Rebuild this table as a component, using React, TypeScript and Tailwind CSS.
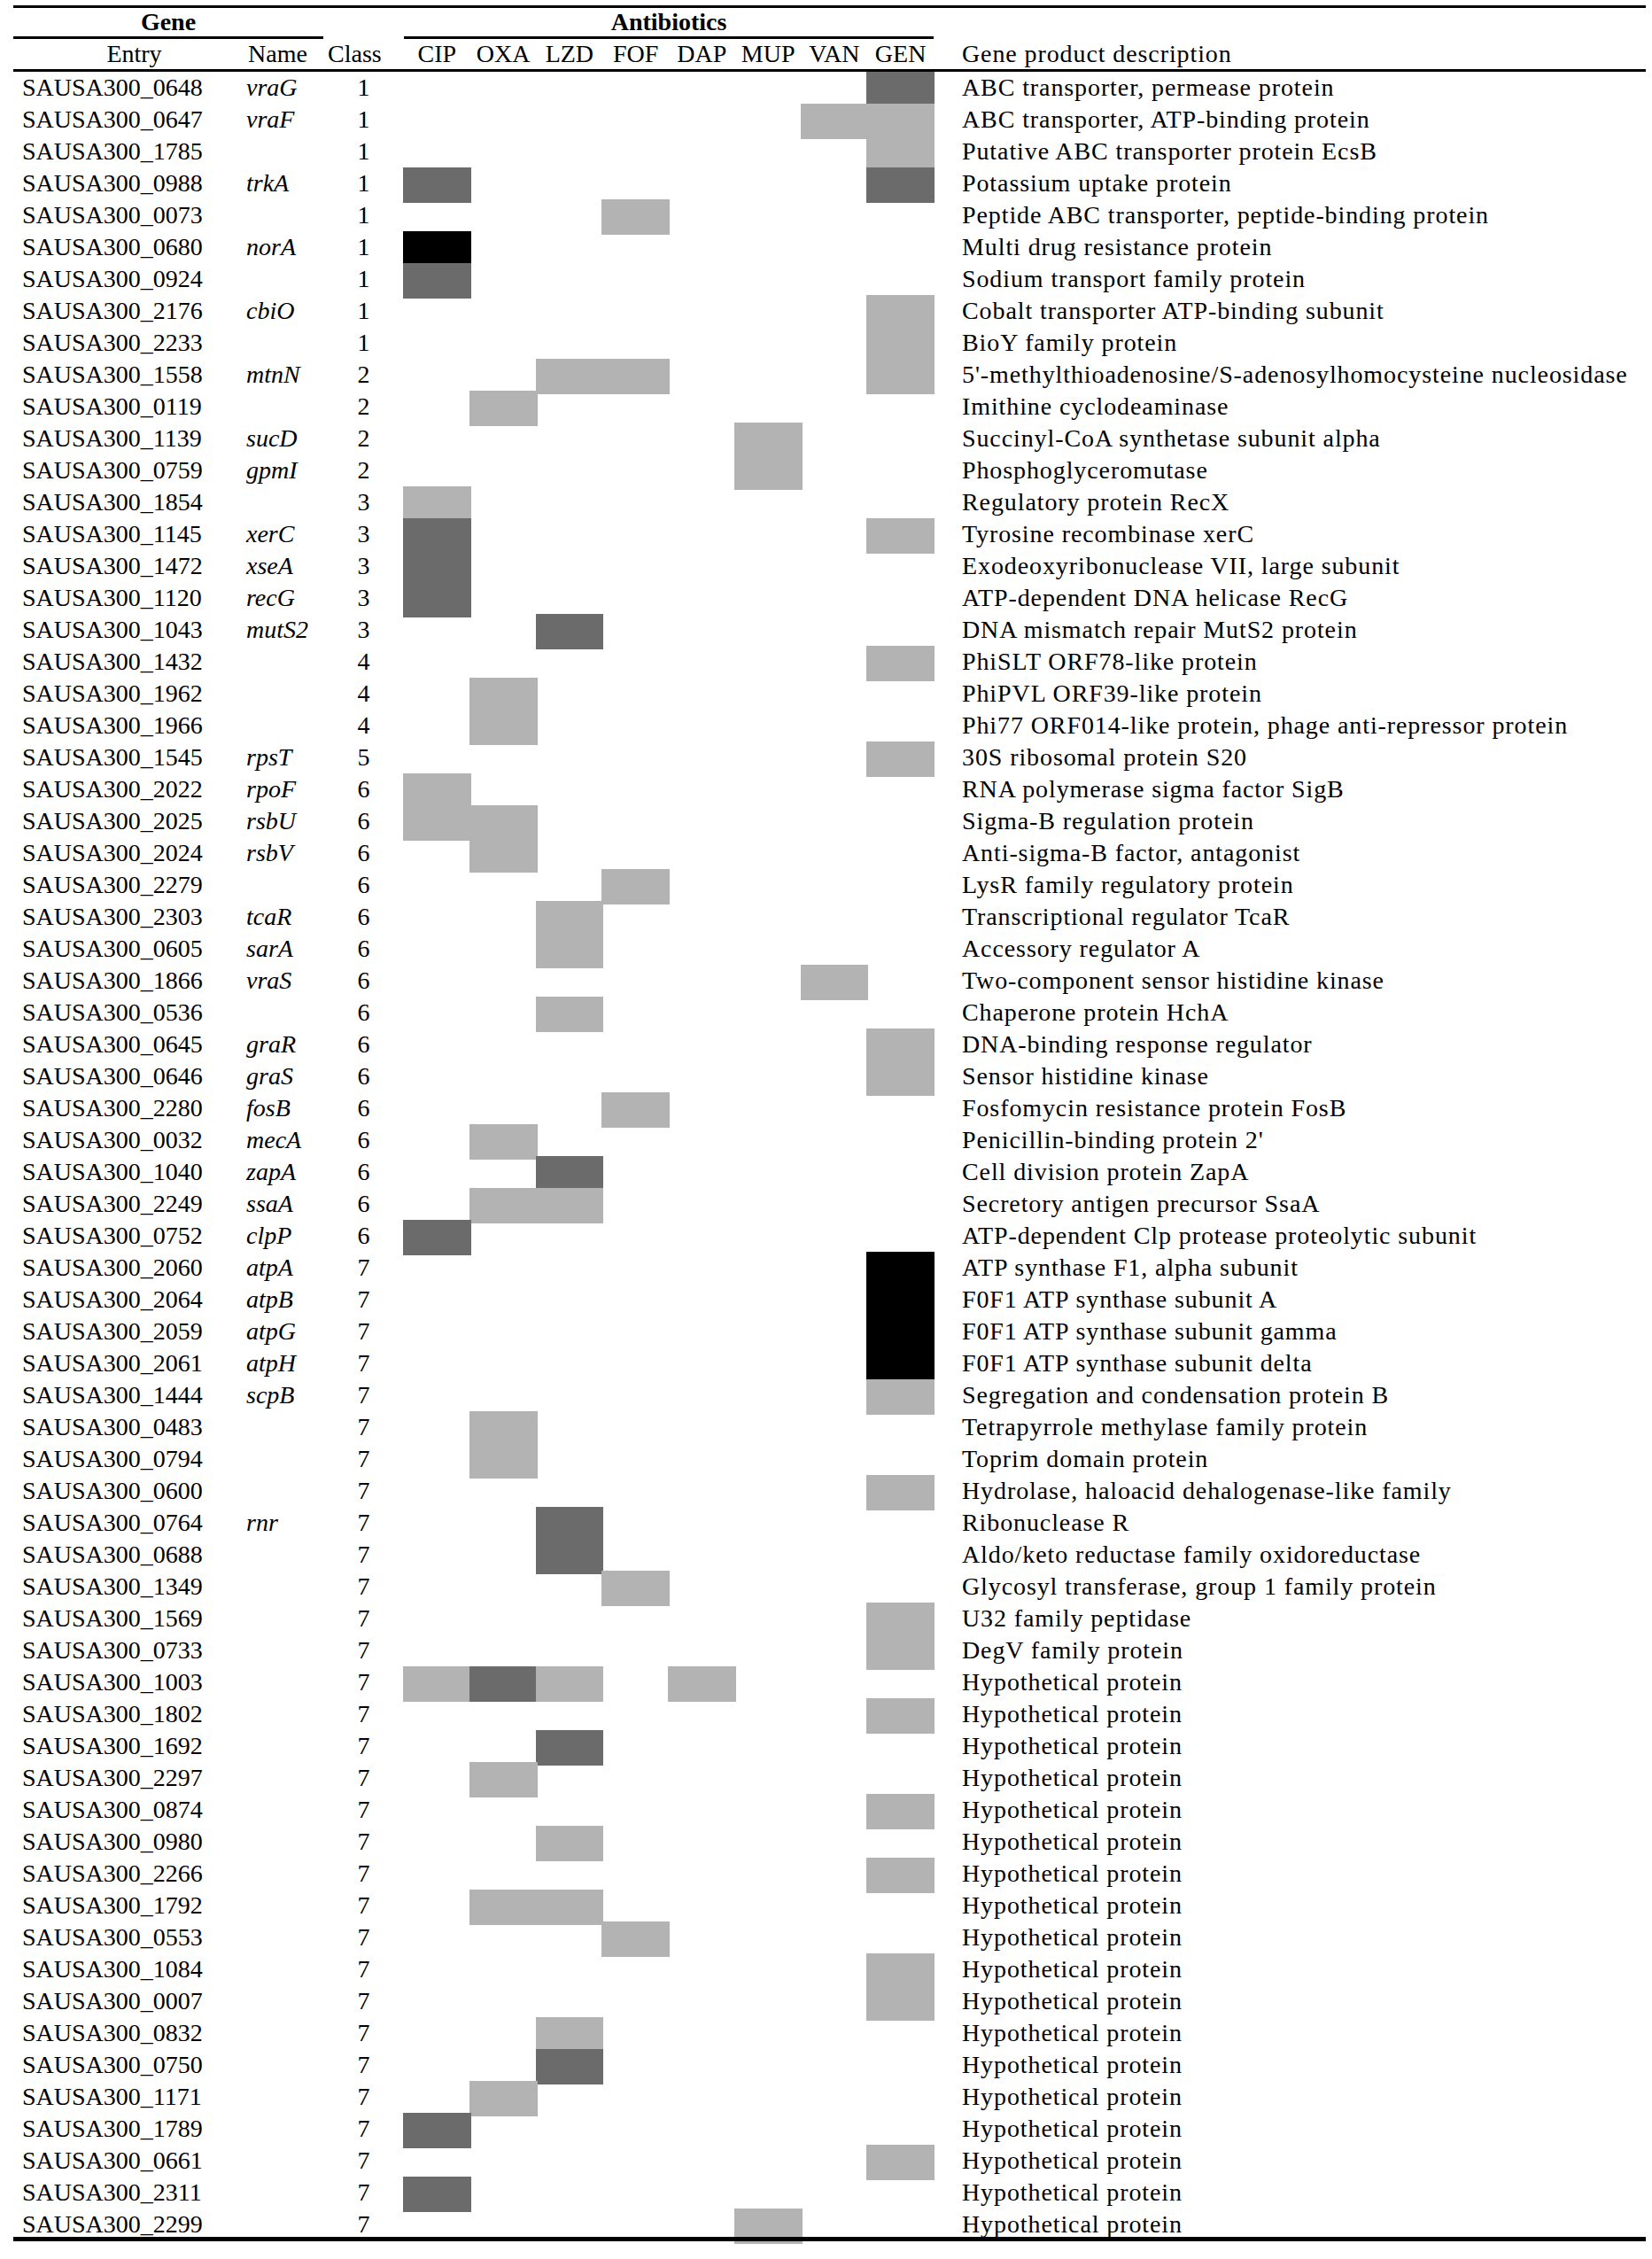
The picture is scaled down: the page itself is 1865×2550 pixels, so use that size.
import React from "react";

// cells: CIP OXA LZD FOF DAP MUP VAN GEN  ('.' none, 'l' light, 'd' dark, 'b' black)
const rows: [string, string, string, string, string][] = [
    ["SAUSA300_0648", "vraG", "1", ".......d", "ABC transporter, permease protein"],
    ["SAUSA300_0647", "vraF", "1", "......ll", "ABC transporter, ATP-binding protein"],
    ["SAUSA300_1785", "", "1", ".......l", "Putative ABC transporter protein EcsB"],
    ["SAUSA300_0988", "trkA", "1", "d......d", "Potassium uptake protein"],
    ["SAUSA300_0073", "", "1", "...l....", "Peptide ABC transporter, peptide-binding protein"],
    ["SAUSA300_0680", "norA", "1", "b.......", "Multi drug resistance protein"],
    ["SAUSA300_0924", "", "1", "d.......", "Sodium transport family protein"],
    ["SAUSA300_2176", "cbiO", "1", ".......l", "Cobalt transporter ATP-binding subunit"],
    ["SAUSA300_2233", "", "1", ".......l", "BioY family protein"],
    ["SAUSA300_1558", "mtnN", "2", "..ll...l", "5'-methylthioadenosine/S-adenosylhomocysteine nucleosidase"],
    ["SAUSA300_0119", "", "2", ".l......", "Imithine cyclodeaminase"],
    ["SAUSA300_1139", "sucD", "2", ".....l..", "Succinyl-CoA synthetase subunit alpha"],
    ["SAUSA300_0759", "gpmI", "2", ".....l..", "Phosphoglyceromutase"],
    ["SAUSA300_1854", "", "3", "l.......", "Regulatory protein RecX"],
    ["SAUSA300_1145", "xerC", "3", "d......l", "Tyrosine recombinase xerC"],
    ["SAUSA300_1472", "xseA", "3", "d.......", "Exodeoxyribonuclease VII, large subunit"],
    ["SAUSA300_1120", "recG", "3", "d.......", "ATP-dependent DNA helicase RecG"],
    ["SAUSA300_1043", "mutS2", "3", "..d.....", "DNA mismatch repair MutS2 protein"],
    ["SAUSA300_1432", "", "4", ".......l", "PhiSLT ORF78-like protein"],
    ["SAUSA300_1962", "", "4", ".l......", "PhiPVL ORF39-like protein"],
    ["SAUSA300_1966", "", "4", ".l......", "Phi77 ORF014-like protein, phage anti-repressor protein"],
    ["SAUSA300_1545", "rpsT", "5", ".......l", "30S ribosomal protein S20"],
    ["SAUSA300_2022", "rpoF", "6", "l.......", "RNA polymerase sigma factor SigB"],
    ["SAUSA300_2025", "rsbU", "6", "ll......", "Sigma-B regulation protein"],
    ["SAUSA300_2024", "rsbV", "6", ".l......", "Anti-sigma-B factor, antagonist"],
    ["SAUSA300_2279", "", "6", "...l....", "LysR family regulatory protein"],
    ["SAUSA300_2303", "tcaR", "6", "..l.....", "Transcriptional regulator TcaR"],
    ["SAUSA300_0605", "sarA", "6", "..l.....", "Accessory regulator A"],
    ["SAUSA300_1866", "vraS", "6", "......l.", "Two-component sensor histidine kinase"],
    ["SAUSA300_0536", "", "6", "..l.....", "Chaperone protein HchA"],
    ["SAUSA300_0645", "graR", "6", ".......l", "DNA-binding response regulator"],
    ["SAUSA300_0646", "graS", "6", ".......l", "Sensor histidine kinase"],
    ["SAUSA300_2280", "fosB", "6", "...l....", "Fosfomycin resistance protein FosB"],
    ["SAUSA300_0032", "mecA", "6", ".l......", "Penicillin-binding protein 2'"],
    ["SAUSA300_1040", "zapA", "6", "..d.....", "Cell division protein ZapA"],
    ["SAUSA300_2249", "ssaA", "6", ".ll.....", "Secretory antigen precursor SsaA"],
    ["SAUSA300_0752", "clpP", "6", "d.......", "ATP-dependent Clp protease proteolytic subunit"],
    ["SAUSA300_2060", "atpA", "7", ".......b", "ATP synthase F1, alpha subunit"],
    ["SAUSA300_2064", "atpB", "7", ".......b", "F0F1 ATP synthase subunit A"],
    ["SAUSA300_2059", "atpG", "7", ".......b", "F0F1 ATP synthase subunit gamma"],
    ["SAUSA300_2061", "atpH", "7", ".......b", "F0F1 ATP synthase subunit delta"],
    ["SAUSA300_1444", "scpB", "7", ".......l", "Segregation and condensation protein B"],
    ["SAUSA300_0483", "", "7", ".l......", "Tetrapyrrole methylase family protein"],
    ["SAUSA300_0794", "", "7", ".l......", "Toprim domain protein"],
    ["SAUSA300_0600", "", "7", ".......l", "Hydrolase, haloacid dehalogenase-like family"],
    ["SAUSA300_0764", "rnr", "7", "..d.....", "Ribonuclease R"],
    ["SAUSA300_0688", "", "7", "..d.....", "Aldo/keto reductase family oxidoreductase"],
    ["SAUSA300_1349", "", "7", "...l....", "Glycosyl transferase, group 1 family protein"],
    ["SAUSA300_1569", "", "7", ".......l", "U32 family peptidase"],
    ["SAUSA300_0733", "", "7", ".......l", "DegV family protein"],
    ["SAUSA300_1003", "", "7", "ldl.l...", "Hypothetical protein"],
    ["SAUSA300_1802", "", "7", ".......l", "Hypothetical protein"],
    ["SAUSA300_1692", "", "7", "..d.....", "Hypothetical protein"],
    ["SAUSA300_2297", "", "7", ".l......", "Hypothetical protein"],
    ["SAUSA300_0874", "", "7", ".......l", "Hypothetical protein"],
    ["SAUSA300_0980", "", "7", "..l.....", "Hypothetical protein"],
    ["SAUSA300_2266", "", "7", ".......l", "Hypothetical protein"],
    ["SAUSA300_1792", "", "7", ".ll.....", "Hypothetical protein"],
    ["SAUSA300_0553", "", "7", "...l....", "Hypothetical protein"],
    ["SAUSA300_1084", "", "7", ".......l", "Hypothetical protein"],
    ["SAUSA300_0007", "", "7", ".......l", "Hypothetical protein"],
    ["SAUSA300_0832", "", "7", "..l.....", "Hypothetical protein"],
    ["SAUSA300_0750", "", "7", "..d.....", "Hypothetical protein"],
    ["SAUSA300_1171", "", "7", ".l......", "Hypothetical protein"],
    ["SAUSA300_1789", "", "7", "d.......", "Hypothetical protein"],
    ["SAUSA300_0661", "", "7", ".......l", "Hypothetical protein"],
    ["SAUSA300_2311", "", "7", "d.......", "Hypothetical protein"],
    ["SAUSA300_2299", "", "7", ".....l..", "Hypothetical protein"],
];

const antibiotics = ["CIP", "OXA", "LZD", "FOF", "DAP", "MUP", "VAN", "GEN"];

const Cell = ({ v }: { v: string }) => {
    let color = "";
    if (v === "l") color = "bg-[#b3b3b3]";
    if (v === "d") color = "bg-[#6b6b6b]";
    if (v === "b") color = "bg-black";
    return (
        <div className="flex items-center h-full">
            {color && <div className={`h-[40px] w-[calc(100%+2px)] -mx-px shrink-0 ${color}`} />}
        </div>
    );
};

const App = () => {
    return (
        <div className="bg-white w-[1865px] min-h-[2550px] pt-[6px] text-black font-['Liberation_Serif','Times_New_Roman',serif] text-[28px]">
            <div className="ml-[15px] w-[1843px]">
                {/* TOP RULE */}
                <div className="h-[3px] bg-black" />

                {/* GROUP HEADERS -- GENE | ANTIBIOTICS */}
                <div className="flex h-[35px] leading-[32px] font-bold">
                    <div className="w-[350px] text-center border-b-[3px] border-black">Gene</div>
                    <div className="w-[91px]" />
                    <div className="w-[598px] text-center border-b-[3px] border-black">Antibiotics</div>
                </div>

                {/* COLUMN HEADERS */}
                <div className="flex h-[34px] leading-[34px]">
                    <div className="w-[263px] pl-[10px] text-center">Entry</div>
                    <div className="w-[87px] pl-[2px]">Name</div>
                    <div className="w-[91px] pl-[5px]">Class</div>
                    <div className="w-[598px] grid grid-cols-8">
                        {antibiotics.map((a) => (
                            <div key={a} className="text-center">
                                {a}
                            </div>
                        ))}
                    </div>
                    <div className="pl-[32px] tracking-[0.9px]">Gene product description</div>
                </div>
                <div className="h-[3px] bg-black" />

                {/* DATA ROWS */}
                <div>
                    {rows.map(([entry, name, cls, cells, desc]) => (
                        <div key={entry} className="flex h-[36px] leading-[36px]">
                            <div className="w-[263px] pl-[10px] whitespace-nowrap">{entry}</div>
                            <div className="w-[87px] italic">{name}</div>
                            <div className="w-[91px] text-center">{cls}</div>
                            <div className="w-[598px] grid grid-cols-8">
                                {cells.split("").map((v, i) => (
                                    <Cell key={i} v={v} />
                                ))}
                            </div>
                            <div className="pl-[32px] whitespace-nowrap tracking-[0.9px]">{desc}</div>
                        </div>
                    ))}
                </div>

                {/* BOTTOM RULE */}
                <div className="relative h-[5px] -mt-[4px] bg-black" />
            </div>
        </div>
    );
};

export default App;
